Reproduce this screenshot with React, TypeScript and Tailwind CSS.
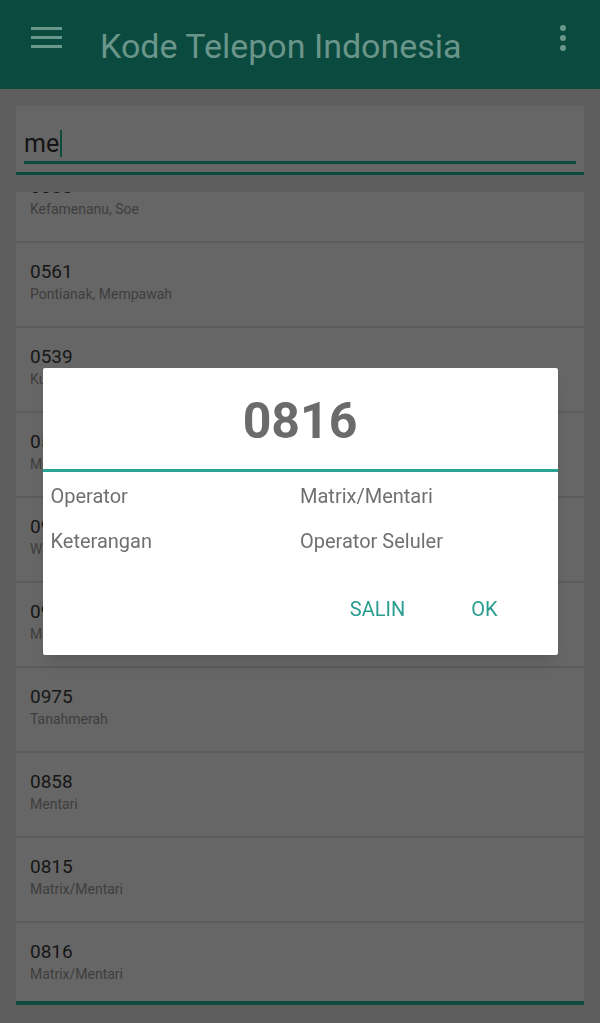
import React from "react";

type Row = { code: string; place: string };

const rows: Row[] = [
  { code: "0388", place: "Kefamenanu, Soe" },
  { code: "0561", place: "Pontianak, Mempawah" },
  { code: "0539", place: "Kuala Kurun" },
  { code: "0536", place: "Muara Teweh" },
  { code: "0902", place: "Wamena" },
  { code: "0963", place: "Merauke" },
  { code: "0975", place: "Tanahmerah" },
  { code: "0858", place: "Mentari" },
  { code: "0815", place: "Matrix/Mentari" },
  { code: "0816", place: "Matrix/Mentari" },
];

function Toolbar() {
  return (
    <header className="flex h-[89px] items-start bg-[#0b4a3e]">
      <div className="mt-[27px] ml-[31px] flex w-[31px] flex-col gap-[6px]">
        <span className="block h-[3px] bg-[#6a978b]" />
        <span className="block h-[3px] bg-[#6a978b]" />
        <span className="block h-[3px] bg-[#6a978b]" />
      </div>
      <h1 className="mt-[29px] ml-[38px] flex-1 text-[34px] leading-[34px] text-[#6a958a]">
        Kode Telepon Indonesia
      </h1>
      <div className="mt-[25px] mr-[34px] flex flex-col gap-[4px]">
        <span className="block h-[6px] w-[6px] rounded-full bg-[#6a978b]" />
        <span className="block h-[6px] w-[6px] rounded-full bg-[#6a978b]" />
        <span className="block h-[6px] w-[6px] rounded-full bg-[#6a978b]" />
      </div>
    </header>
  );
}

function SearchBox() {
  return (
    <div className="mx-4 mt-[17px]">
      <div className="bg-[#666666] px-2 pt-[23px] pb-[8px]">
        <div className="flex h-[28px] items-center text-[25px] leading-none text-[#141414]">
          <span>me</span>
          <span className="ml-[1px] block h-[27px] w-[2px] bg-[#0f4a3e]" />
        </div>
        <div className="mt-[4px] h-[3px] bg-[#0f4a3e]" />
      </div>
      <div className="h-[3px] bg-[#0f4a3e]" />
    </div>
  );
}

function ListRow({ row }: { row: Row }) {
  return (
    <div className="h-[85px] border-b-2 border-[#5c5c5c] bg-[#666666] px-[14px] pt-[18px]">
      <div className="text-[19px] leading-[22px] text-[#161616]">{row.code}</div>
      <div className="mt-[2px] text-[14px] leading-[18px] text-[#3e3e3e]">
        {row.place}
      </div>
    </div>
  );
}

function Dialog() {
  return (
    <div className="fixed inset-0 flex items-center justify-center">
      <div className="w-[515px] overflow-hidden rounded-[2px] bg-white shadow-lg">
        <div className="flex h-[101px] items-center justify-center pt-[4px] text-[50px] font-bold leading-none text-[#6b6b6b]">
          0816
        </div>
        <div className="h-[3px] bg-[#2aa294]" />
        <div className="grid grid-cols-2 px-[8px] pt-[2px] text-[20px] leading-[45px] text-[#707070]">
          <div>Operator</div>
          <div>Matrix/Mentari</div>
          <div>Keterangan</div>
          <div>Operator Seluler</div>
        </div>
        <div className="flex justify-end gap-[66px] pt-[33px] pr-[60px] pb-[34px] text-[20px] leading-[24px] text-[#2a9d8f]">
          <span>SALIN</span>
          <span>OK</span>
        </div>
      </div>
    </div>
  );
}

export default function App() {
  return (
    <div
      className="relative h-[1023px] w-[600px] overflow-hidden bg-[#5e5e5e]"
      style={{ fontFamily: "Roboto, 'Noto Sans', sans-serif" }}
    >
      <Toolbar />
      <SearchBox />
      <div className="mx-4 mt-[17px] h-[809px] overflow-hidden">
        <div className="-mt-[34px]">
          {rows.map((r) => (
            <ListRow key={r.code} row={r} />
          ))}
        </div>
      </div>
      <div className="mx-4 h-[4px] bg-[#0f4a3e]" />
      <Dialog />
    </div>
  );
}
